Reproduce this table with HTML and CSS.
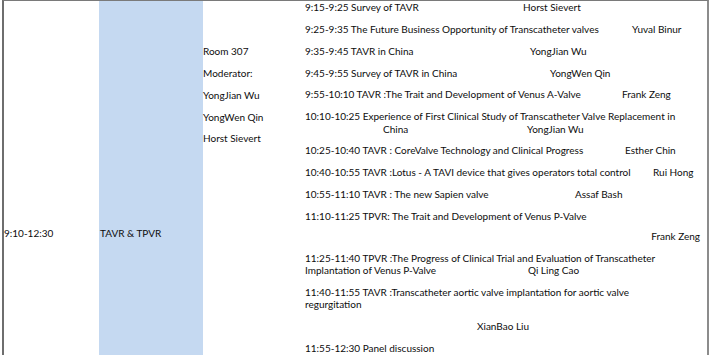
FILE: index.html
```html
<!DOCTYPE html>
<html>
<head>
<meta charset="utf-8">
<link rel="stylesheet" href="styles.css">
</head>
<body>
<div class="sheet">
  <div class="cell c-time">9:10-12:30</div>
  <div class="cell c-topic">TAVR &amp; TPVR</div>
  <div class="cell c-room">
    <div class="line">Room 307</div>
    <div class="line">Moderator:</div>
    <div class="line">YongJian Wu</div>
    <div class="line">YongWen Qin</div>
    <div class="line">Horst Sievert</div>
  </div>
  <div class="cell c-talks">
    <div class="entry"><span class="title w218">9:15-9:25 Survey of TAVR</span><span class="who">Horst Sievert</span></div>
    <div class="entry"><span class="title w327">9:25-9:35 The Future Business Opportunity of Transcatheter valves</span><span class="who">Yuval Binur</span></div>
    <div class="entry"><span class="title w225">9:35-9:45 TAVR in China</span><span class="who">YongJian Wu</span></div>
    <div class="entry"><span class="title w245">9:45-9:55 Survey of TAVR in China</span><span class="who">YongWen Qin</span></div>
    <div class="entry"><span class="title w317">9:55-10:10 TAVR :The Trait and Development of Venus A-Valve</span><span class="who">Frank Zeng</span></div>
    <div class="entry">
      <div>10:10-10:25 Experience of First Clinical Study of Transcatheter Valve Replacement in</div>
      <div><span class="title w222 indent">China</span><span class="who">YongJian Wu</span></div>
    </div>
    <div class="entry"><span class="title w320">10:25-10:40 TAVR : CoreValve Technology and Clinical Progress</span><span class="who">Esther Chin</span></div>
    <div class="entry"><span class="title w348">10:40-10:55 TAVR :Lotus - A TAVI device that gives operators total control</span><span class="who">Rui Hong</span></div>
    <div class="entry"><span class="title w270">10:55-11:10 TAVR : The new Sapien valve</span><span class="who">Assaf Bash</span></div>
    <div class="entry">
      <div>11:10-11:25 TPVR: The Trait and Development of Venus P-Valve</div>
      <div class="right-name">Frank Zeng</div>
    </div>
    <div class="entry">
      <div>11:25-11:40 TPVR :The Progress of Clinical Trial and Evaluation of Transcatheter</div>
      <div><span class="title w223">Implantation of Venus P-Valve</span><span class="who">Qi Ling Cao</span></div>
    </div>
    <div class="entry">
      <div>11:40-11:55 TAVR :Transcatheter aortic valve implantation for aortic valve</div>
      <div>regurgitation</div>
      <div class="sub-name">XianBao Liu</div>
    </div>
    <div class="entry">11:55-12:30 Panel discussion</div>
  </div>
</div>
</body>
</html>
```

FILE: styles.css
```css
html, body {
  margin: 0;
  padding: 0;
  background: #ffffff;
}
body {
  width: 711px;
  height: 355px;
  overflow: hidden;
  font-family: Lato, "Liberation Sans", sans-serif;
  font-size: 10px;
  line-height: 12.3px;
  color: #0d0d0d;
}
.sheet {
  margin-left: 2px;
  width: 707px;
  height: 355px;
  display: grid;
  grid-template-columns: 95px 104px 102px 1fr;
  border-top: 1px solid #7a7a7a;
  border-left: 2px solid #6e6e6e;
  border-right: 2px solid #8c8c8c;
  box-sizing: border-box;
}
.cell {
  white-space: nowrap;
}
.c-time {
  padding-top: 226px;
  padding-left: 0;
}
.c-topic {
  background: #c5d9f1;
  padding-top: 226px;
  padding-left: 1px;
}
.c-room {
  padding-top: 44px;
  padding-left: 0;
}
.c-room .line {
  margin-bottom: 9.55px;
}
.c-talks {
  padding-left: 0;
  padding-right: 7px;
}
.entry {
  margin-bottom: 9.55px;
}
.title {
  display: inline-block;
}
.indent { padding-left: 78px; box-sizing: border-box; }
.w218 { width: 218px; }
.w222 { width: 222px; }
.w223 { width: 223px; }
.w225 { width: 225px; }
.w245 { width: 245px; }
.w270 { width: 270px; }
.w317 { width: 317px; }
.w320 { width: 320px; }
.w327 { width: 327px; }
.w348 { width: 348px; }
.right-name {
  text-align: right;
  margin-top: 7.7px;
}
.sub-name {
  padding-left: 172px;
  margin-top: 9.55px;
}
```
